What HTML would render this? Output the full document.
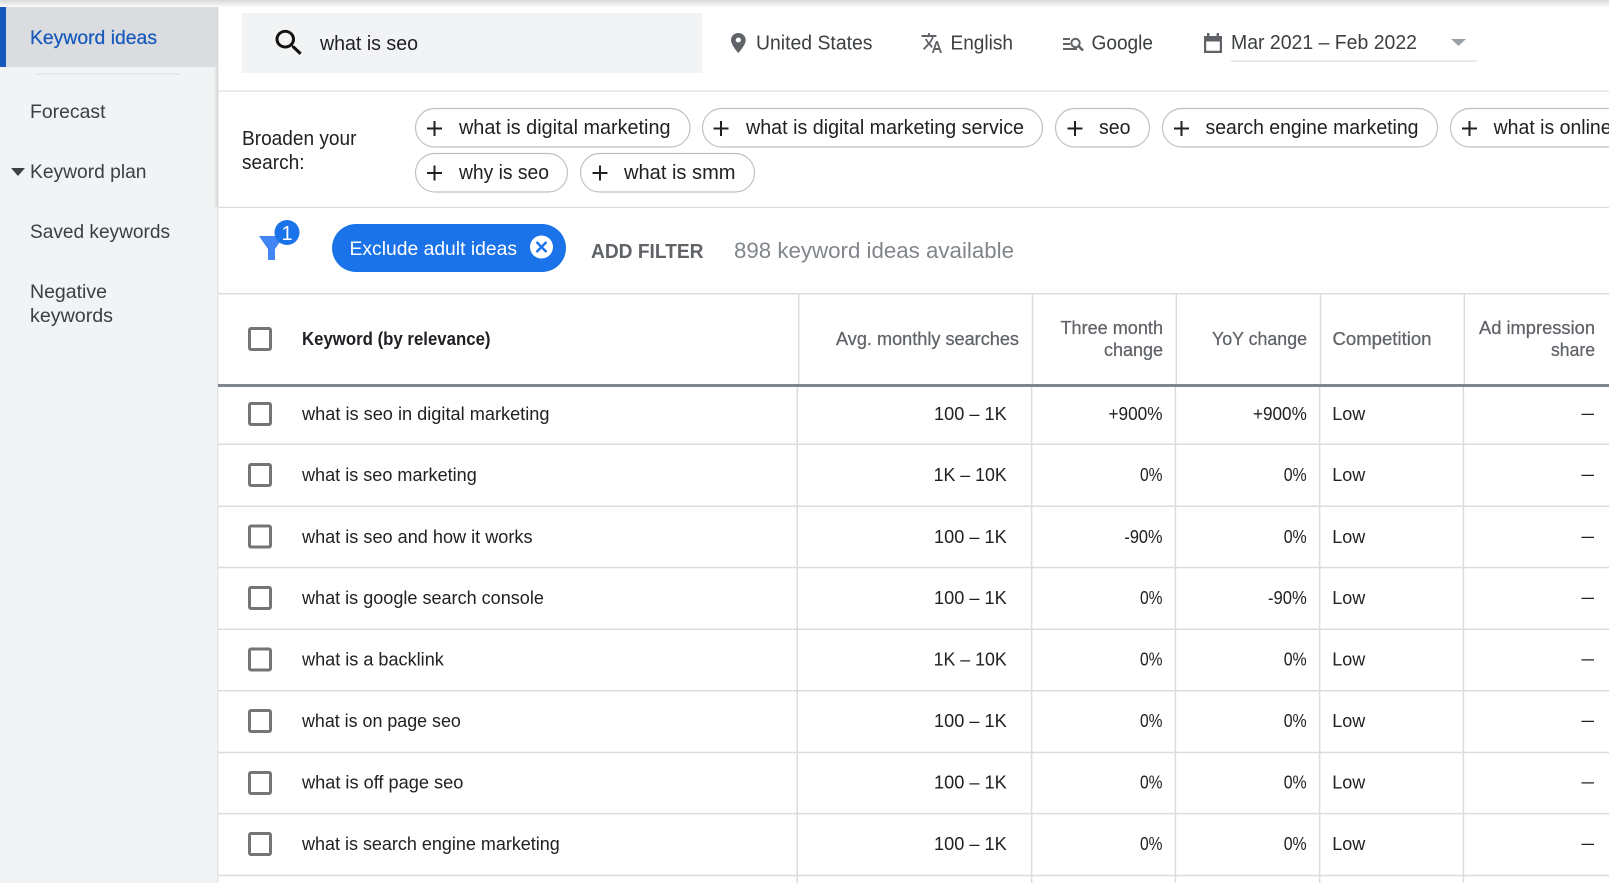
<!DOCTYPE html>
<html lang="en">
<head>
<meta charset="utf-8">
<title>Keyword ideas</title>
<style>
html,body{margin:0;padding:0;background:#fff;width:1609px;height:883px;overflow:hidden}
svg{display:block}
text{font-family:"Liberation Sans",Arial,sans-serif;font-size:18.5px;fill:#202124}
.side{font-size:19.5px;fill:#3c4043}
.top{font-size:20px;fill:#3c4043}
.chip{font-size:20px;fill:#202124}
.chipbox{fill:#fff;stroke:#bdc1c6;stroke-width:1.2}
.h{font-size:18.5px;fill:#5f6368;stroke:#5f6368;stroke-width:.25}
.ln{stroke:#dadce0;stroke-width:1.5}
.cb{fill:#fff;stroke:#757575;stroke-width:3}
.pl{stroke:#202124;stroke-width:2}
</style>
</head>
<body>
<svg width="1609" height="883" viewBox="0 0 1609 883" xmlns="http://www.w3.org/2000/svg">
<defs>
<linearGradient id="tg" x1="0" y1="0" x2="0" y2="1"><stop offset="0" stop-color="#d8d9da"/><stop offset="1" stop-color="#fbfbfb"/></linearGradient>
<linearGradient id="sg" x1="0" y1="0" x2="1" y2="0"><stop offset="0" stop-color="#e6e7e9" stop-opacity="0"/><stop offset="1" stop-color="#d0d2d5"/></linearGradient>
</defs>

<!-- sidebar -->
<rect x="0" y="0" width="217" height="883" fill="#f1f3f4"/>
<rect x="217" y="0" width="1.5" height="883" fill="#e3e5e7"/>
<rect x="0" y="7" width="216.5" height="60" fill="#dadce0"/>
<rect x="213" y="7" width="5" height="200" fill="url(#sg)"/>
<rect x="0" y="7" width="6" height="60" fill="#185abc"/>
<rect x="0" y="0" width="1609" height="7" fill="url(#tg)"/>
<rect x="36" y="73.5" width="144" height="1" fill="#dadce0"/>
<text class="side" x="30" y="44" textLength="127" lengthAdjust="spacingAndGlyphs" style="fill:#185abc;stroke:#185abc;stroke-width:.25">Keyword ideas</text>
<text class="side" x="30" y="118" textLength="75.5" lengthAdjust="spacingAndGlyphs">Forecast</text>
<polygon points="11,168 25,168 18,176" fill="#3c4043"/>
<text class="side" x="30" y="178" textLength="116.5" lengthAdjust="spacingAndGlyphs">Keyword plan</text>
<text class="side" x="30" y="238" textLength="140" lengthAdjust="spacingAndGlyphs">Saved keywords</text>
<text class="side" x="30" y="298" textLength="77" lengthAdjust="spacingAndGlyphs">Negative</text>
<text class="side" x="30" y="322" textLength="83" lengthAdjust="spacingAndGlyphs">keywords</text>

<!-- top bar -->
<rect x="242" y="13" width="460" height="60" fill="#f1f3f4"/>
<path transform="translate(271 25.6) scale(1.5 1.43)" fill="#111" d="M15.5 14h-.79l-.28-.27A6.471 6.471 0 0 0 16 9.5 6.5 6.5 0 1 0 9.5 16c1.61 0 3.09-.59 4.23-1.57l.27.28v.79l5 4.99L20.49 19l-4.99-5zm-6 0C7.01 14 5 11.99 5 9.5S7.01 5 9.5 5 14 7.01 14 9.5 11.99 14 9.5 14z"/>
<text class="top" x="320" y="50" textLength="98" lengthAdjust="spacingAndGlyphs" style="fill:#202124">what is seo</text>

<path transform="translate(725.75 31) scale(1.05 1)" fill="#5f6368" d="M12 2C8.13 2 5 5.13 5 9c0 5.25 7 13 7 13s7-7.75 7-13c0-3.87-3.13-7-7-7zm0 9.5a2.5 2.5 0 0 1 0-5 2.5 2.5 0 0 1 0 5z"/>
<text class="top" x="756" y="49.5" textLength="116.5" lengthAdjust="spacingAndGlyphs">United States</text>
<path transform="translate(920.6 31) scale(.93 1)" fill="#5f6368" d="M12.87 15.07l-2.54-2.51.03-.03c1.74-1.94 2.98-4.17 3.71-6.53H17V4h-7V2H8v2H1v2h11.17C11.5 7.92 10.44 9.75 9 11.35 8.07 10.32 7.3 9.19 6.69 8h-2c.73 1.63 1.73 3.17 2.98 4.56l-5.09 5.02L4 19l5-5 3.11 3.11.76-2.04zM18.5 10h-2L12 22h2l1.12-3h4.75L21 22h2l-4.5-12zm-2.62 7l1.62-4.33L19.12 17h-3.24z"/>
<text class="top" x="950.5" y="49.5" textLength="62.5" lengthAdjust="spacingAndGlyphs">English</text>
<g stroke="#5f6368" stroke-width="2" fill="none">
<path d="M1063 39h7M1063 44h7M1063 49h14"/>
<circle cx="1075.5" cy="43" r="4.2"/>
<path d="M1078.5 46l4.5 4.5" stroke-width="2.6"/>
</g>
<text class="top" x="1091.5" y="49.5" textLength="61.5" lengthAdjust="spacingAndGlyphs">Google</text>
<g fill="#5f6368">
<path d="M1204 36h18v17h-18zM1206.2 41.5v9.3h13.6v-9.3z" fill-rule="evenodd"/>
<rect x="1207" y="33" width="2.4" height="4"/><rect x="1216.6" y="33" width="2.4" height="4"/>
</g>
<text class="top" x="1231" y="49" textLength="186" lengthAdjust="spacingAndGlyphs">Mar 2021 – Feb 2022</text>
<polygon points="1451,39 1466,39 1458.5,46" fill="#9aa0a6"/>
<rect x="1231" y="60.5" width="246" height="1.2" fill="#dadce0"/>
<rect x="218" y="90.5" width="1391" height="1.2" fill="#dadce0"/>

<!-- broaden -->
<text class="top" x="242" y="145" textLength="114.5" lengthAdjust="spacingAndGlyphs" style="fill:#202124">Broaden your</text>
<text class="top" x="242" y="169" textLength="62.5" lengthAdjust="spacingAndGlyphs" style="fill:#202124">search:</text>

<rect class="chipbox" x="415.5" y="108.5" width="274.5" height="38.5" rx="19.2"/>
<path class="pl" d="M427 128.5h15M434.5 121v15"/>
<text class="chip" x="459" y="134" textLength="211.5" lengthAdjust="spacingAndGlyphs">what is digital marketing</text>

<rect class="chipbox" x="702.5" y="108.5" width="340" height="38.5" rx="19.2"/>
<path class="pl" d="M713.5 128.5h15M721 121v15"/>
<text class="chip" x="746" y="134" textLength="278" lengthAdjust="spacingAndGlyphs">what is digital marketing service</text>

<rect class="chipbox" x="1055.5" y="108.5" width="94" height="38.5" rx="19.2"/>
<path class="pl" d="M1067.5 128.5h15M1075 121v15"/>
<text class="chip" x="1099" y="134" textLength="31.5" lengthAdjust="spacingAndGlyphs">seo</text>

<rect class="chipbox" x="1162.5" y="108.5" width="275" height="38.5" rx="19.2"/>
<path class="pl" d="M1174 128.5h15M1181.5 121v15"/>
<text class="chip" x="1205.5" y="134" textLength="213" lengthAdjust="spacingAndGlyphs">search engine marketing</text>

<rect class="chipbox" x="1450.5" y="108.5" width="230" height="38.5" rx="19.2"/>
<path class="pl" d="M1462 128.5h15M1469.5 121v15"/>
<text class="chip" x="1493.6" y="134" textLength="118" lengthAdjust="spacingAndGlyphs">what is online</text>

<rect class="chipbox" x="415.5" y="153.5" width="152" height="38.5" rx="19.2"/>
<path class="pl" d="M427 173h15M434.5 165.5v15"/>
<text class="chip" x="459" y="179" textLength="90" lengthAdjust="spacingAndGlyphs">why is seo</text>

<rect class="chipbox" x="580.5" y="153.5" width="174" height="38.5" rx="19.2"/>
<path class="pl" d="M592.5 173h15M600 165.5v15"/>
<text class="chip" x="624" y="179" textLength="111.5" lengthAdjust="spacingAndGlyphs">what is smm</text>

<rect x="218" y="206.8" width="1391" height="1.2" fill="#dadce0"/>

<!-- filter row -->
<polygon points="259,236 284,236 275,249 275,260 268,260 268,249" fill="#4285f4"/>
<circle cx="287" cy="232.5" r="12.5" fill="#1a73e8"/>
<text x="287" y="240" text-anchor="middle" style="font-size:20px;fill:#fff">1</text>
<rect x="332" y="224" width="234" height="48" rx="24" fill="#1a73e8"/>
<text x="349.5" y="255" textLength="167.5" lengthAdjust="spacingAndGlyphs" style="font-size:19.5px;fill:#fff">Exclude adult ideas</text>
<circle cx="541.5" cy="247" r="11.5" fill="#fff"/>
<path d="M536.5 242l10 10M546.5 242l-10 10" stroke="#1a73e8" stroke-width="2.4"/>
<text x="591" y="258" textLength="112.5" lengthAdjust="spacingAndGlyphs" style="font-size:20px;font-weight:bold;fill:#5f6368">ADD FILTER</text>
<text x="734" y="258" textLength="280" lengthAdjust="spacingAndGlyphs" style="font-size:22px;fill:#80868b">898 keyword ideas available</text>

<!-- table lines -->
<rect x="218" y="293" width="1391" height="1.5" fill="#dadce0"/>
<path class="ln" d="M798.7 294V384M1032.5 294V384M1176.3 294V384M1320.5 294V384M1464.3 294V384"/>
<path class="ln" d="M797.3 387V883M1031.6 387V883M1175.4 387V883M1319.6 387V883M1463.4 387V883"/>
<path class="ln" d="M218 444.2H1609M218 506.2H1609M218 567.5H1609M218 629.3H1609M218 690.7H1609M218 752.5H1609M218 813.6H1609M218 875.5H1609"/>
<rect x="218" y="384" width="1391" height="3" fill="#80868b"/>

<!-- header -->
<rect class="cb" x="249.5" y="328.5" width="21" height="21" rx="1.5"/>
<text x="302" y="345" textLength="188.5" lengthAdjust="spacingAndGlyphs" style="font-weight:bold;font-size:18px">Keyword (by relevance)</text>
<text class="h" x="836" y="345" textLength="183" lengthAdjust="spacingAndGlyphs">Avg. monthly searches</text>
<text class="h" x="1060.5" y="334" textLength="102.5" lengthAdjust="spacingAndGlyphs">Three month</text>
<text class="h" x="1104" y="356" textLength="59" lengthAdjust="spacingAndGlyphs">change</text>
<text class="h" x="1212" y="345" textLength="95" lengthAdjust="spacingAndGlyphs">YoY change</text>
<text class="h" x="1332.5" y="345" textLength="99" lengthAdjust="spacingAndGlyphs">Competition</text>
<text class="h" x="1479" y="334" textLength="116" lengthAdjust="spacingAndGlyphs">Ad impression</text>
<text class="h" x="1551" y="356" textLength="44" lengthAdjust="spacingAndGlyphs">share</text>

<!-- row 1 -->
<rect class="cb" x="249.5" y="403.5" width="21" height="21" rx="1.5"/>
<text x="302" y="420" textLength="247.5" lengthAdjust="spacingAndGlyphs">what is seo in digital marketing</text>
<text x="934" y="420" textLength="72.7" lengthAdjust="spacingAndGlyphs">100 – 1K</text>
<text x="1108.5" y="420" textLength="54" lengthAdjust="spacingAndGlyphs">+900%</text>
<text x="1253" y="420" textLength="53.8" lengthAdjust="spacingAndGlyphs">+900%</text>
<text x="1332.3" y="420" textLength="33" lengthAdjust="spacingAndGlyphs">Low</text>
<text x="1581.5" y="419" textLength="12.5" lengthAdjust="spacingAndGlyphs">–</text>

<!-- row 2 -->
<rect class="cb" x="249.5" y="464.5" width="21" height="21" rx="1.5"/>
<text x="302" y="481" textLength="174.8" lengthAdjust="spacingAndGlyphs">what is seo marketing</text>
<text x="933.6" y="481" textLength="73.1" lengthAdjust="spacingAndGlyphs">1K – 10K</text>
<text x="1140" y="481" textLength="22.5" lengthAdjust="spacingAndGlyphs">0%</text>
<text x="1283.7" y="481" textLength="23" lengthAdjust="spacingAndGlyphs">0%</text>
<text x="1332.3" y="481" textLength="33" lengthAdjust="spacingAndGlyphs">Low</text>
<text x="1581.5" y="480" textLength="12.5" lengthAdjust="spacingAndGlyphs">–</text>

<!-- row 3 -->
<rect class="cb" x="249.5" y="526" width="21" height="21" rx="1.5"/>
<text x="302" y="543" textLength="230.5" lengthAdjust="spacingAndGlyphs">what is seo and how it works</text>
<text x="934" y="543" textLength="72.7" lengthAdjust="spacingAndGlyphs">100 – 1K</text>
<text x="1124.4" y="543" textLength="38.1" lengthAdjust="spacingAndGlyphs">-90%</text>
<text x="1283.7" y="543" textLength="23" lengthAdjust="spacingAndGlyphs">0%</text>
<text x="1332.3" y="543" textLength="33" lengthAdjust="spacingAndGlyphs">Low</text>
<text x="1581.5" y="542" textLength="12.5" lengthAdjust="spacingAndGlyphs">–</text>

<!-- row 4 -->
<rect class="cb" x="249.5" y="587.5" width="21" height="21" rx="1.5"/>
<text x="302" y="604" textLength="241.9" lengthAdjust="spacingAndGlyphs">what is google search console</text>
<text x="934" y="604" textLength="72.7" lengthAdjust="spacingAndGlyphs">100 – 1K</text>
<text x="1140" y="604" textLength="22.5" lengthAdjust="spacingAndGlyphs">0%</text>
<text x="1268" y="604" textLength="38.8" lengthAdjust="spacingAndGlyphs">-90%</text>
<text x="1332.3" y="604" textLength="33" lengthAdjust="spacingAndGlyphs">Low</text>
<text x="1581.5" y="603" textLength="12.5" lengthAdjust="spacingAndGlyphs">–</text>

<!-- row 5 -->
<rect class="cb" x="249.5" y="649" width="21" height="21" rx="1.5"/>
<text x="302" y="665.5" textLength="141.8" lengthAdjust="spacingAndGlyphs">what is a backlink</text>
<text x="933.6" y="665.5" textLength="73.1" lengthAdjust="spacingAndGlyphs">1K – 10K</text>
<text x="1140" y="665.5" textLength="22.5" lengthAdjust="spacingAndGlyphs">0%</text>
<text x="1283.7" y="665.5" textLength="23" lengthAdjust="spacingAndGlyphs">0%</text>
<text x="1332.3" y="665.5" textLength="33" lengthAdjust="spacingAndGlyphs">Low</text>
<text x="1581.5" y="664.5" textLength="12.5" lengthAdjust="spacingAndGlyphs">–</text>

<!-- row 6 -->
<rect class="cb" x="249.5" y="710.5" width="21" height="21" rx="1.5"/>
<text x="302" y="727" textLength="158.8" lengthAdjust="spacingAndGlyphs">what is on page seo</text>
<text x="934" y="727" textLength="72.7" lengthAdjust="spacingAndGlyphs">100 – 1K</text>
<text x="1140" y="727" textLength="22.5" lengthAdjust="spacingAndGlyphs">0%</text>
<text x="1283.7" y="727" textLength="23" lengthAdjust="spacingAndGlyphs">0%</text>
<text x="1332.3" y="727" textLength="33" lengthAdjust="spacingAndGlyphs">Low</text>
<text x="1581.5" y="726" textLength="12.5" lengthAdjust="spacingAndGlyphs">–</text>

<!-- row 7 -->
<rect class="cb" x="249.5" y="772.5" width="21" height="21" rx="1.5"/>
<text x="302" y="788.5" textLength="161.3" lengthAdjust="spacingAndGlyphs">what is off page seo</text>
<text x="934" y="788.5" textLength="72.7" lengthAdjust="spacingAndGlyphs">100 – 1K</text>
<text x="1140" y="788.5" textLength="22.5" lengthAdjust="spacingAndGlyphs">0%</text>
<text x="1283.7" y="788.5" textLength="23" lengthAdjust="spacingAndGlyphs">0%</text>
<text x="1332.3" y="788.5" textLength="33" lengthAdjust="spacingAndGlyphs">Low</text>
<text x="1581.5" y="787.5" textLength="12.5" lengthAdjust="spacingAndGlyphs">–</text>

<!-- row 8 -->
<rect class="cb" x="249.5" y="833.5" width="21" height="21" rx="1.5"/>
<text x="302" y="850" textLength="257.8" lengthAdjust="spacingAndGlyphs">what is search engine marketing</text>
<text x="934" y="850" textLength="72.7" lengthAdjust="spacingAndGlyphs">100 – 1K</text>
<text x="1140" y="850" textLength="22.5" lengthAdjust="spacingAndGlyphs">0%</text>
<text x="1283.7" y="850" textLength="23" lengthAdjust="spacingAndGlyphs">0%</text>
<text x="1332.3" y="850" textLength="33" lengthAdjust="spacingAndGlyphs">Low</text>
<text x="1581.5" y="849" textLength="12.5" lengthAdjust="spacingAndGlyphs">–</text>
</svg>
</body>
</html>
